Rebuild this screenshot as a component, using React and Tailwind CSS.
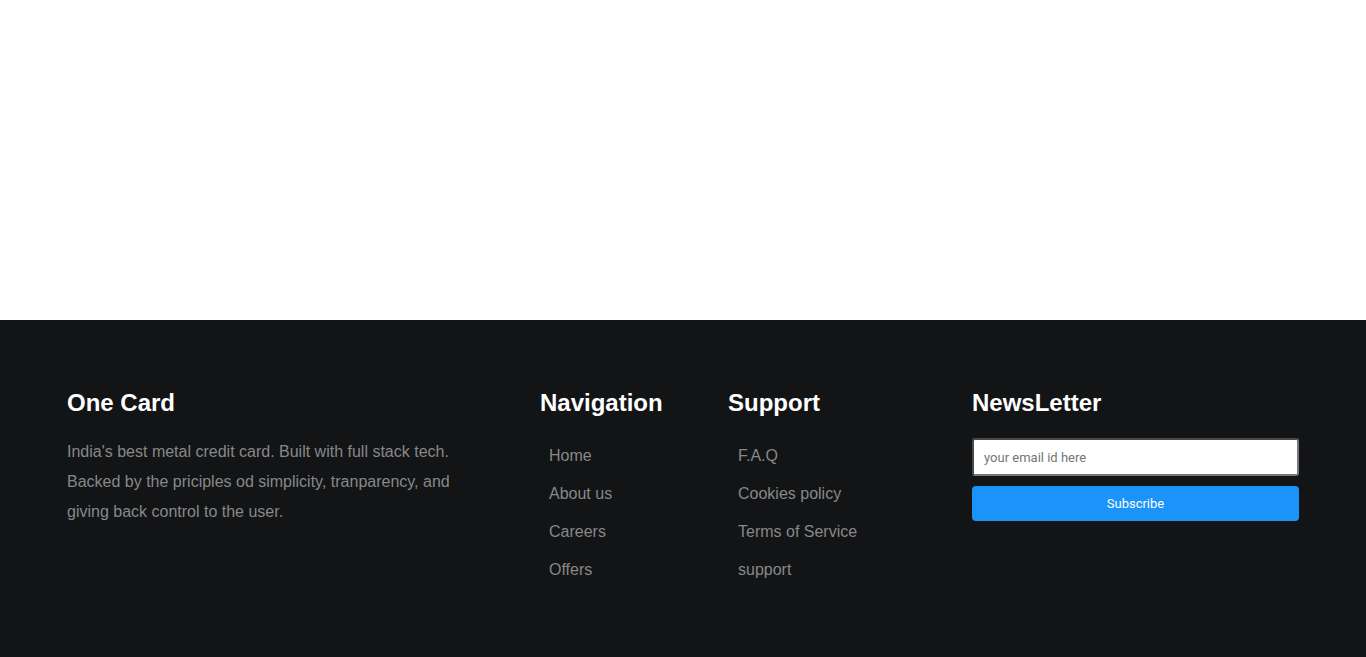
export default function App() {
  const nav = ["Home", "About us", "Careers", "Offers"];
  const support = ["F.A.Q", "Cookies policy", "Terms of Service", "support"];
  return (
    <div className="w-full" style={{ fontFamily: '"Liberation Sans", Arial, sans-serif' }}>
      <div className="h-[320px] bg-white"></div>
      <footer className="h-[337px] bg-[#131416] px-[67px] pt-[69px] flex">
        <div className="w-[473px]">
          <h2 className="text-white text-[24px] font-bold leading-[28px]">One Card</h2>
          <p className="mt-[20px] w-[400px] text-[16px] leading-[30px] text-[#888888]">
            India's best metal credit card. Built with full stack tech. Backed by the priciples od simplicity, tranparency, and giving back control to the user.
          </p>
        </div>
        <div className="w-[188px]">
          <h2 className="text-white text-[24px] font-bold leading-[28px]">Navigation</h2>
          <ul className="mt-[20px] pl-[9px]">
            {nav.map((t) => (
              <li key={t} className="text-[16px] leading-[38px] text-[#888888]">{t}</li>
            ))}
          </ul>
        </div>
        <div className="w-[244px]">
          <h2 className="text-white text-[24px] font-bold leading-[28px]">Support</h2>
          <ul className="mt-[20px] pl-[10px]">
            {support.map((t) => (
              <li key={t} className="text-[16px] leading-[38px] text-[#888888]">{t}</li>
            ))}
          </ul>
        </div>
        <div className="w-[327px]">
          <h2 className="text-white text-[24px] font-bold leading-[28px]">NewsLetter</h2>
          <div className="mt-[21px] flex flex-col gap-[10px]">
            <input
              type="text"
              placeholder="your email id here"
              className="h-[38px] w-full rounded-[3px] border-2 border-[#767676] border-t-[#4a4a4a] border-l-[#4a4a4a] bg-white px-[10px] text-[13px] text-black placeholder:text-[#757575] outline-none"
              style={{ fontFamily: 'Roboto, sans-serif' }}
            />
            <button
              className="h-[35px] w-full rounded-[4px] bg-[#1a94f8] text-white text-[13px]"
              style={{ fontFamily: 'Roboto, sans-serif' }}
            >
              Subscribe
            </button>
          </div>
        </div>
      </footer>
    </div>
  );
}
